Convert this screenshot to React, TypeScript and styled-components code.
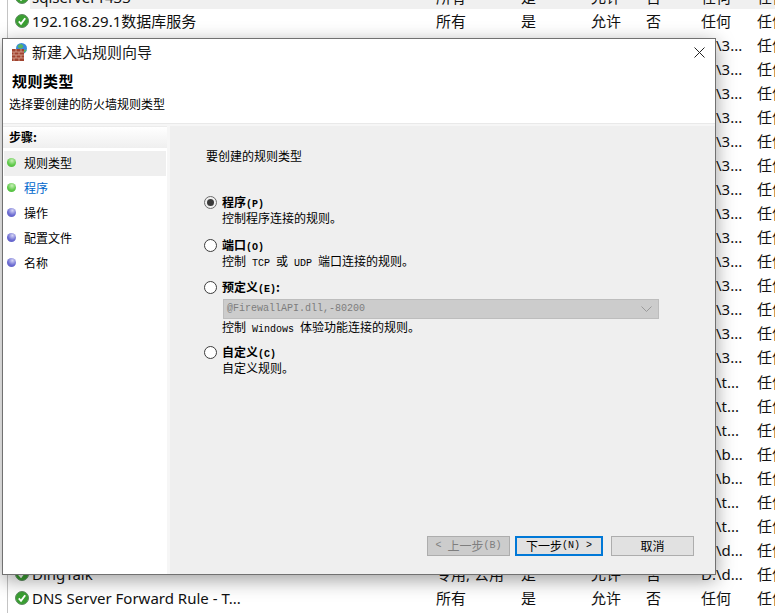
import React from 'react';
import styled, { createGlobalStyle } from 'styled-components';

interface Rule {
  name: string;
  profile: string;
  program: string;
}

const tails = [
  ...Array(14).fill('D:\\3...'),
  ...Array(3).fill('D:\\t...'),
  ...Array(2).fill('D:\\b...'),
  ...Array(2).fill('D:\\t...'),
  'D:\\d...',
];

const rules: Rule[] = [
  { name: 'sqlserver1433', profile: '所有', program: '任何' },
  { name: '192.168.29.1数据库服务', profile: '所有', program: '任何' },
  ...tails.map((program) => ({ name: '', profile: '所有', program })),
  { name: 'DingTalk', profile: '专用, 公用', program: 'D:\\d...' },
  { name: 'DNS Server Forward Rule - T...', profile: '所有', program: '任何' },
];

const steps = ['规则类型', '程序', '操作', '配置文件', '名称'];

const GlobalStyle = createGlobalStyle`
html, body {
  margin: 0;
  height: 100%;
  overflow: hidden;
  background: #fff;
}
* {
  box-sizing: border-box;
}
`;

const Page = styled.div`
position: relative;
width: 775px;
height: 613px;
overflow: hidden;
font-family: "Noto Sans CJK SC", sans-serif;
`;

const RuleList = styled.div`
margin: -15px 0 0 7px;
height: 640px;
border-left: 1px solid #c4c4c4;
`;

const RuleRow = styled.div<{ $selected?: boolean }>`
display: grid;
grid-template-columns: 7px 17px 404px 85px 70px 55px 55px 56px 40px;
align-items: center;
height: 24.04px;
background: ${(p) => (p.$selected ? 'linear-gradient(90deg, #fff 22px, #f0f0f0 22px)' : '#fff')};
font-family: "Noto Sans", "Noto Sans CJK SC", sans-serif;
font-size: 15px;
color: #111;
white-space: nowrap;
`;

const RowCell = styled.span`
line-height: 24px;
`;

const CheckIcon = styled.svg`
grid-column: 2;
width: 14px;
height: 14px;
`;

const Dialog = styled.div`
position: absolute;
left: 2px;
top: 38px;
width: 714px;
height: 537px;
display: flex;
flex-direction: column;
background: #f6f6f6;
border: 1px solid #717171;
box-shadow: 0 5px 18px rgba(0, 0, 0, 0.38);
color: #000;
`;

const Header = styled.div`
height: 85px;
background: #fff;
border-bottom: 1px solid #e9e9e9;
flex-shrink: 0;
`;

const TitleBar = styled.div`
display: flex;
align-items: center;
height: 26px;
padding: 0 10px 0 9px;
`;

const TitleText = styled.span`
margin-left: 4px;
font-size: 15px;
line-height: 20px;
color: #1a1a1a;
`;

const CloseIcon = styled.svg`
width: 11px;
height: 11px;
margin-left: auto;
`;

const Heading = styled.div`
margin: 7px 0 0 9px;
font-size: 15px;
font-weight: 700;
line-height: 18px;
letter-spacing: 0.5px;
`;

const SubHeading = styled.div`
margin: 6px 0 0 6px;
font-size: 12px;
line-height: 16px;
`;

const Body = styled.div`
flex: 1;
display: flex;
padding-top: 2px;
min-height: 0;
`;

const StepsPanel = styled.div`
width: 164px;
background: #fff;
border-top: 1px solid #ececec;
flex-shrink: 0;
`;

const StepsTitle = styled.div`
height: 21px;
padding-left: 6px;
font-size: 12px;
font-weight: 700;
line-height: 20px;
background: linear-gradient(#fff, #efefef);
`;

const StepList = styled.div`
margin-top: 3px;
display: flex;
flex-direction: column;
`;

const StepRow = styled.div<{ $current?: boolean; $next?: boolean }>`
display: flex;
align-items: center;
height: 25px;
margin: 0 1px;
padding-bottom: 2px;
background: ${(p) => (p.$current ? '#efefef' : 'transparent')};
color: ${(p) => (p.$next ? '#0066cc' : '#000')};
font-size: 12px;
`;

const Bullet = styled.span<{ $done?: boolean }>`
width: 9px;
height: 9px;
margin: -1px 8px 0 3px;
border-radius: 50%;
background: ${(p) =>
    p.$done
      ? 'radial-gradient(circle at 55% 30%, #c8f0b8, #5fc94a 55%, #48b338)'
      : 'radial-gradient(circle at 60% 28%, #d5d5f5, #6c6cd2 55%, #5a5ac0)'};
`;

const Content = styled.div`
flex: 1;
margin-left: 3px;
padding: 23px 21px 18px 34px;
display: flex;
flex-direction: column;
background: #efefef;
`;

const Prompt = styled.div`
margin-left: 2px;
font-size: 12px;
line-height: 14px;
`;

const Options = styled.div`
margin-top: 31px;
display: flex;
flex-direction: column;
`;

const Option = styled.div<{ $top?: number }>`
display: grid;
grid-template-columns: 18px 1fr;
margin-top: ${(p) => p.$top || 0}px;
`;

const Radio = styled.span<{ $checked?: boolean }>`
display: flex;
align-items: center;
justify-content: center;
width: 13px;
height: 13px;
margin-top: 2px;
border-radius: 50%;
border: 1px solid ${(p) => (p.$checked ? '#6b6b6b' : '#3c3c3c')};
background: ${(p) => (p.$checked ? '#f0f0f0' : '#fff')};
&::after {
  content: '';
  display: ${(p) => (p.$checked ? 'block' : 'none')};
  width: 7px;
  height: 7px;
  border-radius: 50%;
  background: #3a3a3a;
}
`;

const OptionLabel = styled.div`
height: 16px;
font-size: 12px;
font-weight: 700;
line-height: 16px;
`;

const OptionText = styled.div`
grid-column: 2;
height: 16px;
font-size: 12px;
line-height: 16px;
`;

const Mono = styled.span`
font-family: "Liberation Mono", monospace;
font-size: 10px;
line-height: 10px;
white-space: pre;
`;

const Select = styled.div`
grid-column: 2;
display: flex;
align-items: center;
justify-content: space-between;
height: 20px;
margin: 4px 0 0 1px;
width: 436px;
padding: 0 6px 0 3px;
background: #cccccc;
border: 1px solid #bdbdbd;
color: #7d7d7d;
`;

const Chevron = styled.svg`
width: 11px;
height: 6px;
`;

const Footer = styled.div`
margin-top: auto;
display: flex;
justify-content: flex-end;
`;

const Button = styled.div<{ $primary?: boolean; $disabled?: boolean }>`
width: ${(p) => (p.$primary ? '88px' : '83px')};
height: 20px;
margin-left: ${(p) => (p.$primary ? '5px' : '8px')};
padding-bottom: 1px;
display: flex;
align-items: center;
justify-content: center;
font-size: 12px;
background: ${(p) => (p.$disabled ? '#cccccc' : '#e1e1e1')};
color: ${(p) => (p.$disabled ? '#7e7e7e' : '#000')};
border: ${(p) => (p.$primary ? '2px solid #0078d7' : '1px solid #adadad')};
&:first-child {
  margin-left: 0;
}
`;

function Check() {
  return (
    <CheckIcon viewBox="0 0 14 14">
      <circle cx="7" cy="7" r="6.5" fill="#3a9f32" stroke="#5f8a62" />
      <path d="M3.8 7.4 6 9.8 10.2 4.2" fill="none" stroke="#fff" strokeWidth="1.9" />
    </CheckIcon>
  );
}

function WizardIcon() {
  return (
    <svg width="16" height="18" viewBox="0 0 16 18">
      <circle cx="9.5" cy="5.500" r="5.500" fill="#3b8bdc" />
      <path d="M6 2.500c2-2 4-1.500 5 0s-1 3-2.500 3S5 4 6 2.500zM11 7.500c1-1 2.500-1 3.500-.5-.5 1.500-1.500 2.500-3.500 2.800z" fill="#58b560" />
      <rect x="0" y="6" width="12" height="12" fill="#a0432f" />
      <path d="M0 9h12M0 12h12M0 15h12M4 6v3M9 6v3M2 9v3M7 9v3M4 12v3M9 12v3M2 15v3M7 15v3" stroke="#d9a897" strokeWidth="0.8" />
    </svg>
  );
}

export default function App() {
  return (
    <Page>
      <GlobalStyle />
      <RuleList>
        {rules.map((rule, i) => {
          return (
            <RuleRow key={i} $selected={i === 0}>
              <Check />
              <RowCell>{rule.name}</RowCell>
              <RowCell>{rule.profile}</RowCell>
              <RowCell>是</RowCell>
              <RowCell>允许</RowCell>
              <RowCell>否</RowCell>
              <RowCell>{rule.program}</RowCell>
              <RowCell>任何</RowCell>
            </RuleRow>
          );
        })}
      </RuleList>
      <Dialog>
        <Header>
          <TitleBar>
            <WizardIcon />
            <TitleText>新建入站规则向导</TitleText>
            <CloseIcon viewBox="0 0 11 11">
              <path d="M0.500 0.500 10.500 10.500M10.500 0.500 0.500 10.500" stroke="#222" fill="none" />
            </CloseIcon>
          </TitleBar>
          <Heading>规则类型</Heading>
          <SubHeading>选择要创建的防火墙规则类型</SubHeading>
        </Header>
        <Body>
          <StepsPanel>
            <StepsTitle>步骤:</StepsTitle>
            <StepList>
              {steps.map((step, i) => {
                return (
                  <StepRow key={step} $current={i === 0} $next={i === 1}>
                    <Bullet $done={i < 2} />
                    {step}
                  </StepRow>
                );
              })}
            </StepList>
          </StepsPanel>
          <Content>
            <Prompt>要创建的规则类型</Prompt>
            <Options>
              <Option>
                <Radio $checked />
                <OptionLabel>程序<Mono>(P)</Mono></OptionLabel>
                <OptionText>控制程序连接的规则。</OptionText>
              </Option>
              <Option $top={11}>
                <Radio />
                <OptionLabel>端口<Mono>(O)</Mono></OptionLabel>
                <OptionText>控制<Mono> TCP </Mono>或<Mono> UDP </Mono>端口连接的规则。</OptionText>
              </Option>
              <Option $top={10}>
                <Radio />
                <OptionLabel>预定义<Mono>(E)</Mono>:</OptionLabel>
                <Select>
                  <Mono>@FirewallAPI.dll,-80200</Mono>
                  <Chevron viewBox="0 0 11 6">
                    <path d="M0.500 0.500 5.500 5.500 10.500 0.500" stroke="#9a9a9a" fill="none" />
                  </Chevron>
                </Select>
                <OptionText>控制<Mono> Windows </Mono>体验功能连接的规则。</OptionText>
              </Option>
              <Option $top={9}>
                <Radio />
                <OptionLabel>自定义<Mono>(C)</Mono></OptionLabel>
                <OptionText>自定义规则。</OptionText>
              </Option>
            </Options>
            <Footer>
              <Button $disabled><Mono>{'< '}</Mono>上一步<Mono>(B)</Mono></Button>
              <Button $primary>下一步<Mono>{'(N) >'}</Mono></Button>
              <Button>取消</Button>
            </Footer>
          </Content>
        </Body>
      </Dialog>
    </Page>
  );
}
